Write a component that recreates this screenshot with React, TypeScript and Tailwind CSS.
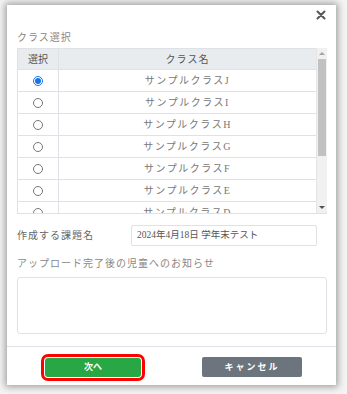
import React from 'react';

const rows = ['J', 'I', 'H', 'G', 'F', 'E', 'D'];

const serif = { fontFamily: '"Liberation Serif", "Noto Sans CJK JP", serif' };

const Radio: React.FC<{ checked?: boolean }> = ({ checked }) =>
  checked ? (
    <span className="flex h-[10px] w-[10px] items-center justify-center rounded-full border border-[#1a73e8] bg-white">
      <span className="h-[6px] w-[6px] rounded-full bg-[#1a73e8]" />
    </span>
  ) : (
    <span className="h-[10px] w-[10px] rounded-full border border-[#777] bg-white" />
  );

const App: React.FC = () => {
  return (
    <div className="h-[394px] w-[347px] bg-[#f4f4f4] pl-[7px] pt-[5px]" style={serif}>
      <div className="flex h-[380px] w-[329px] flex-col bg-white shadow-[0_0_7px_2px_rgba(0,0,0,0.35)]">
        {/* header */}
        <div className="flex h-[17px] justify-end pr-[10px] pt-[4px]">
          <svg width="10" height="10" viewBox="0 0 10 10" className="mt-[1px]">
            <path d="M1.5 1.5L8.5 8.5M8.5 1.5L1.5 8.5" stroke="#555" strokeWidth="2" strokeLinecap="round" />
          </svg>
        </div>

        <div className="flex flex-col px-[10px]">
          <div className="h-[26px] pt-[10px] text-[10px] leading-[12px] tracking-[1px] text-[#888]">クラス選択</div>

          {/* table */}
          <div className="flex h-[166px] w-[310px] border-b border-l border-[#dee2e6]">
            <div className="flex w-[299px] flex-col overflow-hidden">
              <div className="flex h-[22px] shrink-0 border-b border-t border-[#dee2e6] bg-[#e9ecef] text-[10px] text-[#555]">
                <div className="flex w-[41px] items-center justify-center border-r border-[#dee2e6]">選択</div>
                <div className="flex flex-1 items-center justify-center tracking-[1px]">クラス名</div>
              </div>
              {rows.map((r, i) => (
                <div key={r} className="flex h-[22px] shrink-0 border-b border-[#dee2e6] text-[10px] text-[#777]">
                  <div className="flex w-[41px] items-center justify-center border-r border-[#dee2e6]">
                    <Radio checked={i === 0} />
                  </div>
                  <div className="flex flex-1 items-center justify-center tracking-[1.5px]">サンプルクラス{r}</div>
                </div>
              ))}
            </div>
            {/* scrollbar */}
            <div className="flex w-[11px] flex-col items-center border-l border-[#e5e5e5] bg-[#f1f1f1]">
              <div className="flex h-[11px] items-center justify-center">
                <span className="h-0 w-0 border-x-[3px] border-b-[3px] border-x-transparent border-b-[#a3a3a3]" />
              </div>
              <div className="h-[97px] w-[8px] bg-[#c1c1c1]" />
              <div className="flex-1" />
              <div className="flex h-[11px] items-center justify-center">
                <span className="h-0 w-0 border-x-[3px] border-t-[3px] border-x-transparent border-t-[#505050]" />
              </div>
            </div>
          </div>

          {/* assignment name */}
          <div className="mt-[11px] flex items-center">
            <div className="w-[114px] text-[10px] tracking-[1px] text-[#666]">作成する課題名</div>
            <div className="flex h-[21px] w-[186px] items-center rounded-[2px] border border-[#dee2e6] px-[5px] text-[9.5px] text-[#555]">
              2024年4月18日 学年末テスト
            </div>
          </div>

          <div className="mt-[12px] text-[10px] leading-[12px] tracking-[1px] text-[#888]">アップロード完了後の児童へのお知らせ</div>
          <div className="mt-[7px] h-[57px] w-[310px] rounded-[3px] border border-[#dee2e6]" />
        </div>

        <div className="mt-[12px] border-t border-[#dee2e6]" />

        {/* footer */}
        <div className="flex items-center gap-[61px] pl-[38px] pt-[10px]" style={{ fontFamily: '"Noto Sans CJK JP", sans-serif' }}>
          <div className="flex h-[19px] w-[96px] items-center justify-center rounded-[2px] bg-[#28a745] text-[9px] font-bold text-white outline-[3px] outline-solid outline-[#ff0000] outline-offset-[1px] rounded-[3px]">
            次へ
          </div>
          <div className="flex h-[20px] w-[100px] items-center justify-center rounded-[2px] bg-[#6c757d] text-[9px] font-bold tracking-[2px] text-white">
            キャンセル
          </div>
        </div>
      </div>
    </div>
  );
};

export default App;
